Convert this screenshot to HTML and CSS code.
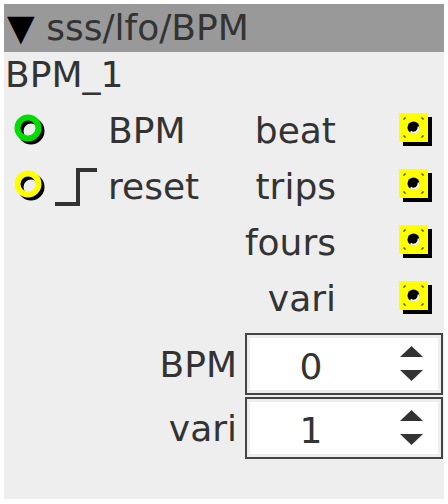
FILE: index.html
```html
<!DOCTYPE html>
<html lang="en">
  <head>
    <meta charset="UTF-8" />
    <title>sss/lfo/BPM</title>
    <link rel="stylesheet" href="styles.css">
  </head>
  <body>
    <div class="panel">
      <div class="header"><span class="arrow">▼</span> sss/lfo/BPM</div>
      <div class="title">BPM_1</div>

      <div class="ports">
        <div class="port-row">
          <svg class="inlet" width="32" height="32" viewBox="0 0 32 32">
            <circle cx="17" cy="17" r="10.5" fill="none" stroke="#000" stroke-width="6" />
            <circle cx="14" cy="14" r="10.5" fill="none" stroke="#00dd00" stroke-width="6" />
          </svg>
          <span class="step-slot"></span>
          <span class="label-left">BPM</span>
          <span class="label-right">beat</span>
          <svg class="outlet" width="34" height="34" viewBox="0 0 34 34">
            <rect x="4" y="4" width="29" height="29" fill="#000" />
            <rect x="0" y="0" width="29" height="29" fill="#ffff00" />
            <circle cx="14.5" cy="14.5" r="6" fill="#000" />
            <path d="M11.5 18.5 A5 5 0 0 0 19.5 13.5" fill="none" stroke="#fff" stroke-width="2" />
            <path d="M5 7 V5 H7 M22 5 H24 V7 M24 22 V24 H22 M7 24 H5 V22" fill="none" stroke="#333" stroke-width="1" />
          </svg>
        </div>

        <div class="port-row">
          <svg class="inlet" width="32" height="32" viewBox="0 0 32 32">
            <circle cx="17" cy="17" r="10.5" fill="none" stroke="#000" stroke-width="6" />
            <circle cx="14" cy="14" r="10.5" fill="none" stroke="#ffff00" stroke-width="6" />
          </svg>
          <svg class="step" width="46" height="44" viewBox="0 0 46 44">
            <path d="M2 40 H25 V6 H44" fill="none" stroke="#333" stroke-width="4" />
          </svg>
          <span class="label-left">reset</span>
          <span class="label-right">trips</span>
          <svg class="outlet" width="34" height="34" viewBox="0 0 34 34">
            <rect x="4" y="4" width="29" height="29" fill="#000" />
            <rect x="0" y="0" width="29" height="29" fill="#ffff00" />
            <circle cx="14.5" cy="14.5" r="6" fill="#000" />
            <path d="M11.5 18.5 A5 5 0 0 0 19.5 13.5" fill="none" stroke="#fff" stroke-width="2" />
            <path d="M5 7 V5 H7 M22 5 H24 V7 M24 22 V24 H22 M7 24 H5 V22" fill="none" stroke="#333" stroke-width="1" />
          </svg>
        </div>

        <div class="port-row">
          <span class="label-right">fours</span>
          <svg class="outlet" width="34" height="34" viewBox="0 0 34 34">
            <rect x="4" y="4" width="29" height="29" fill="#000" />
            <rect x="0" y="0" width="29" height="29" fill="#ffff00" />
            <circle cx="14.5" cy="14.5" r="6" fill="#000" />
            <path d="M11.5 18.5 A5 5 0 0 0 19.5 13.5" fill="none" stroke="#fff" stroke-width="2" />
            <path d="M5 7 V5 H7 M22 5 H24 V7 M24 22 V24 H22 M7 24 H5 V22" fill="none" stroke="#333" stroke-width="1" />
          </svg>
        </div>

        <div class="port-row">
          <span class="label-right">vari</span>
          <svg class="outlet" width="34" height="34" viewBox="0 0 34 34">
            <rect x="4" y="4" width="29" height="29" fill="#000" />
            <rect x="0" y="0" width="29" height="29" fill="#ffff00" />
            <circle cx="14.5" cy="14.5" r="6" fill="#000" />
            <path d="M11.5 18.5 A5 5 0 0 0 19.5 13.5" fill="none" stroke="#fff" stroke-width="2" />
            <path d="M5 7 V5 H7 M22 5 H24 V7 M24 22 V24 H22 M7 24 H5 V22" fill="none" stroke="#333" stroke-width="1" />
          </svg>
        </div>
      </div>

      <div class="numbers">
        <div class="num-row">
          <span class="num-label">BPM</span>
          <div class="num-box">
            <span class="num-value">0</span>
            <svg class="spin" width="23" height="36" viewBox="0 0 23 36">
              <polygon points="11.5,0 23,11 0,11" fill="#333" />
              <polygon points="0,24 23,24 11.5,35" fill="#333" />
            </svg>
          </div>
        </div>
        <div class="num-row">
          <span class="num-label">vari</span>
          <div class="num-box">
            <span class="num-value">1</span>
            <svg class="spin" width="23" height="36" viewBox="0 0 23 36">
              <polygon points="11.5,0 23,11 0,11" fill="#333" />
              <polygon points="0,24 23,24 11.5,35" fill="#333" />
            </svg>
          </div>
        </div>
      </div>
    </div>
  </body>
</html>
```

FILE: styles.css
```css
* {
  box-sizing: border-box;
  margin: 0;
  padding: 0;
}

body {
  background: #ffffff;
  font-family: "DejaVu Sans", Verdana, sans-serif;
  color: #333333;
}

.panel {
  margin: 4px;
  width: 440px;
  height: 495px;
  background: #eeeeee;
  display: flex;
  flex-direction: column;
}

.header {
  height: 48px;
  line-height: 48px;
  background: #999999;
  font-size: 36px;
  padding-left: 3px;
  white-space: nowrap;
}

.header .arrow {
  color: #000000;
}

.title {
  height: 50px;
  line-height: 46px;
  font-size: 36px;
  padding-left: 1px;
}

.ports {
  display: flex;
  flex-direction: column;
}

.port-row {
  height: 56px;
  display: flex;
  align-items: center;
  padding-left: 10px;
  padding-right: 11px;
  font-size: 36px;
}

.inlet {
  flex: none;
}

.step-slot,
.step {
  flex: none;
  width: 46px;
  margin-left: 7px;
}

.label-left {
  margin-left: 9px;
}

.label-right {
  flex: 1;
  text-align: right;
}

.outlet {
  flex: none;
  margin-left: 63px;
}

.numbers {
  margin-top: 7px;
  display: flex;
  flex-direction: column;
  gap: 2px;
  padding-right: 1px;
}

.num-row {
  display: flex;
  justify-content: flex-end;
  align-items: center;
  gap: 8px;
  font-size: 36px;
}

.num-box {
  width: 198px;
  height: 62px;
  background: #ffffff;
  border: 2px solid #444444;
  box-shadow: inset 0 0 0 3px #eeeeee;
  display: flex;
  align-items: center;
}

.num-value {
  width: 128px;
  text-align: center;
  padding-top: 4px;
}

.spin {
  margin-left: 25px;
}
```
